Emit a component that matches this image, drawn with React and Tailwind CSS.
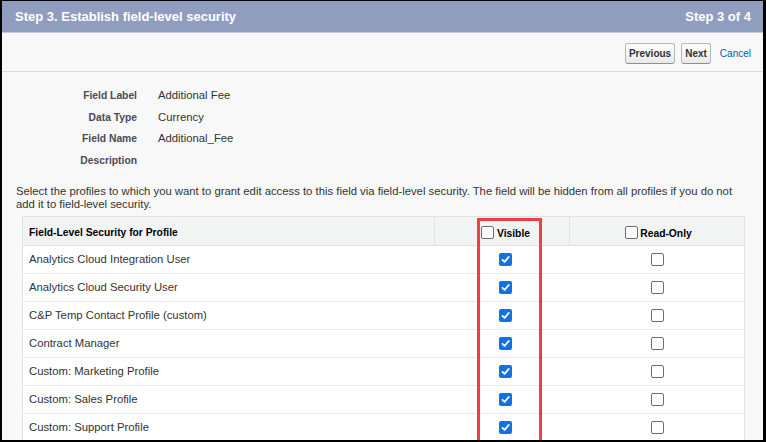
import React from 'react';

const fieldInfo = [
    { label: 'Field Label', value: 'Additional Fee' },
    { label: 'Data Type', value: 'Currency' },
    { label: 'Field Name', value: 'Additional_Fee' },
    { label: 'Description', value: '' },
];

const profiles = [
    'Analytics Cloud Integration User',
    'Analytics Cloud Security User',
    'C&P Temp Contact Profile (custom)',
    'Contract Manager',
    'Custom: Marketing Profile',
    'Custom: Sales Profile',
    'Custom: Support Profile',
];

const Box = ({ checked }) => {
    if (checked) {
        return (
            <span className="w-[13px] h-[13px] rounded-[2px] bg-[#1172e8] flex items-center justify-center shrink-0">
                <svg width="9" height="9" viewBox="0 0 10 10">
                    <path d="M1.6 5.4 L4 7.7 L8.6 2.2" fill="none" stroke="#fff" strokeWidth="2" strokeLinecap="round" strokeLinejoin="round" />
                </svg>
            </span>
        );
    }
    return <span className="w-[13px] h-[13px] rounded-[2px] border border-[#6e6e6e] bg-white shrink-0" />;
};

const Btn = ({ children }) => (
    <button className="h-[21px] px-[3px] border border-[#b5b5b5] border-b-[#8f8f8f] rounded-[3px] bg-linear-to-b from-white to-[#e9e9e9] text-[10px] font-bold text-[#333]">
        {children}
    </button>
);

export default function App() {
    return (
        <div className="w-[766px] h-[442px] bg-black pt-px pl-[2px] pr-[3px] pb-[2px] overflow-hidden">
            <div className="h-full bg-[#f8f8f8] flex flex-col overflow-hidden font-['Liberation_Sans',Arial,sans-serif] text-[#333]">
                {/* header */}
                <div className="h-[32px] shrink-0 bg-[#8f9ebe] border-b border-[#c3cbdd] flex items-center justify-between pl-[13px] pr-[12px] text-white font-bold text-[13px]">
                    <span>Step 3. Establish field-level security</span>
                    <span>Step 3 of 4</span>
                </div>

                {/* buttons */}
                <div className="h-[39px] shrink-0 border-b border-[#dbdbdb] flex items-center justify-end pr-[12px] pt-[2px]">
                    <Btn>Previous</Btn>
                    <div className="w-[6px]" />
                    <Btn>Next</Btn>
                    <a className="ml-[9px] text-[10px] text-[#015ba7]">Cancel</a>
                </div>

                {/* field details */}
                <div className="grid grid-cols-[135px_1fr] gap-x-[21px] pt-[13px] shrink-0">
                    {fieldInfo.map((f) => (
                        <React.Fragment key={f.label}>
                            <div className="h-[21.5px] flex items-center justify-end text-[10.3px] font-bold text-[#4a4a56]">{f.label}</div>
                            <div className="h-[21.5px] flex items-center text-[11.3px]">{f.value}</div>
                        </React.Fragment>
                    ))}
                </div>

                <p className="mt-[13.5px] pl-[14px] pr-[18px] text-[11.3px] leading-[13px] shrink-0">
                    Select the profiles to which you want to grant edit access to this field via field-level security. The field will be hidden from all profiles if you do not add it to field-level security.
                </p>

                {/* table */}
                <div className="relative mt-[5px] ml-[20px] w-[723px] border-x border-t border-[#e0e3e5] bg-white">
                    <div className="grid grid-cols-[411px_135px_175px] h-[29px] bg-[#f2f3f3] border-b border-[#e0e3e5] text-[10.3px] font-bold text-[#000]">
                        <div className="pl-[6px] flex items-center pt-[4px]">Field-Level Security for Profile</div>
                        <div className="border-l border-[#e0e3e5] pl-[7px] flex items-end justify-center gap-[3px] pb-[6px]">
                            <Box />
                            <span className="leading-[11px]">Visible</span>
                        </div>
                        <div className="border-l border-[#e0e3e5] pl-[3px] flex items-end justify-center gap-[2px] pb-[6px]">
                            <Box />
                            <span className="leading-[11px]">Read-Only</span>
                        </div>
                    </div>
                    {profiles.map((p) => (
                        <div key={p} className="grid grid-cols-[411px_135px_175px] h-[28px] border-b border-[#ececec] text-[11.3px]">
                            <div className="pl-[6px] flex items-center">{p}</div>
                            <div className="pl-[7px] flex items-center justify-center">
                                <Box checked />
                            </div>
                            <div className="pl-[2px] flex items-center justify-center">
                                <Box />
                            </div>
                        </div>
                    ))}
                    {/* annotation */}
                    <div className="absolute left-[454px] top-[1px] w-[65px] h-[260px] border-[3px] border-[#ef3f42]" />
                </div>
            </div>
        </div>
    );
}
